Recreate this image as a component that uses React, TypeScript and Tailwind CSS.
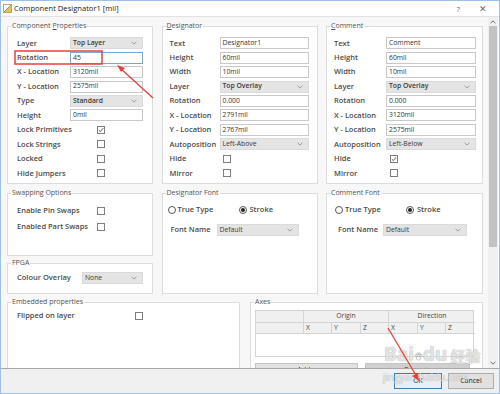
import React from 'react';

function Chevron() {
  return (
    <svg width="6" height="4" viewBox="0 0 6 4" className="shrink-0">
      <path d="M0.6 0.8 L3 3.1 L5.4 0.8" fill="none" stroke="#8c8c8c" strokeWidth="0.8" />
    </svg>
  );
}

function Input({ value, w, focus }: { value: string; w: string; focus?: boolean }) {
  return (
    <div
      className={`flex h-[12px] shrink-0 items-center border bg-white px-[2px] text-[6.8px] text-[#333] ${w} ${
        focus ? 'border-[#7aa6d6]' : 'border-[#c8c8c8]'
      }`}
    >
      {value}
    </div>
  );
}

function Select({ value, w, bold }: { value: string; w: string; bold?: boolean }) {
  return (
    <div
      className={`flex h-[12px] shrink-0 items-center justify-between border border-[#dadada] bg-[#e4e4e4] pl-[2px] pr-[5px] text-[6.8px] text-[#3a3a3a] ${w} ${
        bold ? 'font-semibold' : ''
      }`}
    >
      <span>{value}</span>
      <Chevron />
    </div>
  );
}

function Check({ checked, className = '' }: { checked?: boolean; className?: string }) {
  return (
    <span className={`flex h-[8px] w-[8px] shrink-0 items-center justify-center border border-[#7d7d7d] bg-white ${className}`}>
      {checked && (
        <svg width="6" height="6" viewBox="0 0 6 6">
          <path d="M0.8 3.2 L2.3 4.6 L5.2 1.2" fill="none" stroke="#333" strokeWidth="0.8" />
        </svg>
      )}
    </span>
  );
}

function Radio({ checked }: { checked?: boolean }) {
  return (
    <span className="flex h-[8px] w-[8px] shrink-0 items-center justify-center rounded-full border border-[#555] bg-white">
      {checked && <span className="h-[4px] w-[4px] rounded-full bg-[#222]" />}
    </span>
  );
}

function Row({ label, lw, h = 'h-[14.44px]', children }: { label: string; lw: string; h?: string; children?: React.ReactNode }) {
  return (
    <div className={`flex items-center ${h}`}>
      <span className={`shrink-0 text-[7.5px] font-semibold text-[#4b4b4b] ${lw}`}>{label}</span>
      {children}
    </div>
  );
}

function Group({ title, className = '', children }: { title: React.ReactNode; className?: string; children?: React.ReactNode }) {
  return (
    <fieldset className={`min-w-0 overflow-hidden border border-[#dcdcdc] bg-white ${className}`}>
      <legend className="ml-[3px] px-[1px] text-[7px] leading-[10px] text-[#555]">{title}</legend>
      {children}
    </fieldset>
  );
}

export default function App() {
  return (
    <div className="relative flex h-[394px] w-[500px] flex-col overflow-hidden border border-[#9dc1e6] bg-white font-['Open_Sans','Noto_Sans',sans-serif]">
      {/* title bar */}
      <div className="flex h-[16px] shrink-0 items-center border-b border-[#e2e2e2] bg-white">
        <svg width="9" height="9" viewBox="0 0 9 9" className="ml-[2px]">
          <rect x="0.5" y="0.5" width="8" height="8" fill="#fff" stroke="#b9a66a" />
          <path d="M1 8 L8 1 L8 8 Z" fill="#e7c25a" />
          <path d="M1 8 L8 1" stroke="#9a7b2a" strokeWidth="0.8" />
        </svg>
        <span className="ml-[2px] text-[7.6px] text-[#222]">Component Designator1 [mil]</span>
        <span className="ml-auto text-[8px] text-[#666]">?</span>
        <span className="ml-[19px] mr-[12px] text-[9px] leading-none text-[#666]">✕</span>
      </div>

      <div className="flex min-h-0 flex-1">
        {/* content */}
        <div className="min-w-0 flex-1 overflow-hidden bg-[#f7f7f7] pl-[6px] pr-[4px] pt-[4px]">
          <div className="grid grid-cols-[146px_156px_157px] gap-x-[8.5px]">
            <Group title={<>Component <u>P</u>roperties</>} className="h-[163px]">
              <div className="pl-[9px] pt-[5px]">
                <Row label="Layer" lw="w-[53px]"><Select value="Top Layer" w="w-[73px]" bold /></Row>
                <Row label="Rotation" lw="w-[53px]"><Input value="45" w="w-[73px]" focus /></Row>
                <Row label="X - Location" lw="w-[53px]"><Input value="3120mil" w="w-[73px]" /></Row>
                <Row label="Y - Location" lw="w-[53px]"><Input value="2575mil" w="w-[73px]" /></Row>
                <Row label="Type" lw="w-[53px]"><Select value="Standard" w="w-[73px]" bold /></Row>
                <Row label="Height" lw="w-[53px]"><Input value="0mil" w="w-[73px]" /></Row>
                <Row label="Lock Primitives" lw="w-[80px]"><Check checked /></Row>
                <Row label="Lock Strings" lw="w-[80px]"><Check /></Row>
                <Row label="Locked" lw="w-[80px]"><Check /></Row>
                <Row label="Hide Jumpers" lw="w-[80px]"><Check /></Row>
              </div>
            </Group>

            <Group title={<><u>D</u>esignator</>} className="h-[163px]">
              <div className="pl-[7px] pt-[5px]">
                <Row label="Text" lw="w-[50px]"><Input value="Designator1" w="w-[89px]" /></Row>
                <Row label="Height" lw="w-[50px]"><Input value="60mil" w="w-[89px]" /></Row>
                <Row label="Width" lw="w-[50px]"><Input value="10mil" w="w-[89px]" /></Row>
                <Row label="Layer" lw="w-[50px]"><Select value="Top Overlay" w="w-[89px]" bold /></Row>
                <Row label="Rotation" lw="w-[50px]"><Input value="0.000" w="w-[89px]" /></Row>
                <Row label="X - Location" lw="w-[50px]"><Input value="2791mil" w="w-[89px]" /></Row>
                <Row label="Y - Location" lw="w-[50px]"><Input value="2767mil" w="w-[89px]" /></Row>
                <Row label="Autoposition" lw="w-[50px]"><Select value="Left-Above" w="w-[89px]" /></Row>
                <Row label="Hide" lw="w-[50px]"><Check className="ml-[3px]" /></Row>
                <Row label="Mirror" lw="w-[50px]"><Check className="ml-[3px]" /></Row>
              </div>
            </Group>

            <Group title={<><u>C</u>omment</>} className="h-[163px]">
              <div className="pl-[7px] pt-[5px]">
                <Row label="Text" lw="w-[52px]"><Input value="Comment" w="w-[90px]" /></Row>
                <Row label="Height" lw="w-[52px]"><Input value="60mil" w="w-[90px]" /></Row>
                <Row label="Width" lw="w-[52px]"><Input value="10mil" w="w-[90px]" /></Row>
                <Row label="Layer" lw="w-[52px]"><Select value="Top Overlay" w="w-[90px]" bold /></Row>
                <Row label="Rotation" lw="w-[52px]"><Input value="0.000" w="w-[90px]" /></Row>
                <Row label="X - Location" lw="w-[52px]"><Input value="3120mil" w="w-[90px]" /></Row>
                <Row label="Y - Location" lw="w-[52px]"><Input value="2575mil" w="w-[90px]" /></Row>
                <Row label="Autoposition" lw="w-[52px]"><Select value="Left-Below" w="w-[90px]" /></Row>
                <Row label="Hide" lw="w-[52px]"><Check checked className="ml-[4px]" /></Row>
                <Row label="Mirror" lw="w-[52px]"><Check className="ml-[4px]" /></Row>
              </div>
            </Group>
          </div>

          {/* second row */}
          <div className="mt-[4px] grid grid-cols-[146px_156px_157px] gap-x-[8.5px]">
            <div className="flex flex-col gap-[2px]">
              <Group title="Swapping Options" className="h-[68px]">
                <div className="pl-[9px] pt-[5px]">
                  <Row label="Enable Pin Swaps" lw="w-[80px]" h="h-[16px]"><Check /></Row>
                  <Row label="Enabled Part Swaps" lw="w-[80px]" h="h-[16px]"><Check /></Row>
                </div>
              </Group>
              <Group title="FPGA" className="h-[36px]">
                <div className="pl-[9px] pt-[3px]">
                  <Row label="Colour Overlay" lw="w-[65px]" h="h-[14px]"><Select value="None" w="w-[61px]" /></Row>
                </div>
              </Group>
            </div>

            <Group title="Designator Font" className="h-[106px]">
              <div className="pl-[5px] pt-[5px]">
                <div className="flex h-[14px] items-center text-[7.5px] font-semibold text-[#4b4b4b]">
                  <span className="flex w-[71px] items-center gap-[2px]"><Radio />True Type</span>
                  <span className="flex items-center gap-[3px]"><Radio checked />Stroke</span>
                </div>
                <div className="mt-[6px] pl-[3px]">
                  <Row label="Font Name" lw="w-[46px]" h="h-[14px]"><Select value="Default" w="w-[82px]" /></Row>
                </div>
              </div>
            </Group>

            <Group title="Comment Font" className="h-[106px]">
              <div className="pl-[8px] pt-[5px]">
                <div className="flex h-[14px] items-center text-[7.5px] font-semibold text-[#4b4b4b]">
                  <span className="flex w-[71px] items-center gap-[2px]"><Radio />True Type</span>
                  <span className="flex items-center gap-[3px]"><Radio checked />Stroke</span>
                </div>
                <div className="mt-[6px] pl-[3px]">
                  <Row label="Font Name" lw="w-[45px]" h="h-[14px]"><Select value="Default" w="w-[84px]" /></Row>
                </div>
              </div>
            </Group>
          </div>

          {/* third row */}
          <div className="mt-[3px] grid grid-cols-[233px_233px] gap-x-[10px]">
            <Group title="Embedded properties" className="h-[90px]">
              <div className="pl-[9px] pt-[2px]">
                <Row label="Flipped on layer" lw="w-[118px]" h="h-[14px]"><Check /></Row>
              </div>
            </Group>
            <Group title="Axes" className="h-[90px]">
              <div className="pl-[4px] pr-[8px] pt-[3px]">
                <div className="border border-[#d4d4d4] bg-white text-[6.8px] text-[#444]">
                  <div className="grid grid-cols-[48px_85px_86px] bg-[#f0f0f0]">
                    <div className="h-[12px] border-b border-r border-[#d4d4d4]" />
                    <div className="flex h-[12px] items-center justify-center border-b border-r border-[#d4d4d4]">Origin</div>
                    <div className="flex h-[12px] items-center justify-center border-b border-[#d4d4d4]">Direction</div>
                  </div>
                  <div className="grid grid-cols-[48px_28px_29px_28px_29px_28px_29px] bg-[#f0f0f0]">
                    <div className="h-[11px] border-b border-r border-[#d4d4d4]" />
                    {['X', 'Y', 'Z', 'X', 'Y', 'Z'].map((c, i) => (
                      <div key={i} className="flex h-[11px] items-center border-b border-r border-[#d4d4d4] pl-[2px] last:border-r-0">
                        {c}
                      </div>
                    ))}
                  </div>
                  <div className="h-[22px]" />
                </div>
                <div className="mt-[6px] flex gap-[7px]">
                  <div className="flex h-[14px] w-[103px] items-center justify-center border border-[#c4c4c4] bg-[#e1e1e1] text-[7px] text-[#333]">Add...</div>
                  <div className="flex h-[14px] w-[105px] items-center justify-center border border-[#c4c4c4] bg-[#cfcfcf] text-[7px] text-[#333]">Remove</div>
                </div>
              </div>
            </Group>
          </div>
        </div>

        {/* scrollbar */}
        <div className="mr-[1px] flex w-[10px] shrink-0 flex-col bg-[#f0f0f0]">
          <div className="flex h-[9px] items-center justify-center">
            <svg width="6" height="4" viewBox="0 0 6 4">
              <path d="M0.6 3.2 L3 0.9 L5.4 3.2" fill="none" stroke="#606060" strokeWidth="0.9" />
            </svg>
          </div>
          <div className="mx-[1px] h-[221px] bg-[#c2c2c2]" />
          <div className="flex-1" />
          <div className="flex h-[10px] items-center justify-center">
            <svg width="6" height="4" viewBox="0 0 6 4">
              <path d="M0.6 0.8 L3 3.1 L5.4 0.8" fill="none" stroke="#606060" strokeWidth="0.9" />
            </svg>
          </div>
        </div>
      </div>

      {/* button bar */}
      <div className="flex h-[25px] shrink-0 items-center justify-end gap-[6px] border-t border-[#a8a8a8] bg-[#f0f0f0] pr-[5px]">
        <div className="flex h-[16px] w-[48px] items-center justify-center border border-[#3c7fb1] bg-[#e8eef4] text-[7px] text-[#222]">OK</div>
        <div className="flex h-[16px] w-[46px] items-center justify-center border border-[#adadad] bg-[#e1e1e1] text-[7px] text-[#222]">Cancel</div>
      </div>

      {/* watermark */}
      <div className="pointer-events-none absolute left-[383px] top-[344px] flex items-end leading-none text-white/75 [text-shadow:0_0_1px_#8a8a8a]">
        <span className="text-[19px] font-bold">Bai</span>
        <svg width="9" height="11" viewBox="0 0 13 13" className="mb-[2px]">
          <g fill="#ffffff" fillOpacity="0.8" stroke="#8a8a8a" strokeWidth="0.7">
            <ellipse cx="6.5" cy="9" rx="3.2" ry="2.6" />
            <ellipse cx="3" cy="5" rx="1.3" ry="1.7" />
            <ellipse cx="5.3" cy="2.8" rx="1.3" ry="1.7" />
            <ellipse cx="7.9" cy="2.8" rx="1.3" ry="1.7" />
            <ellipse cx="10.1" cy="5" rx="1.3" ry="1.7" />
          </g>
        </svg>
        <span className="text-[19px] font-bold">du</span>
        <span className="ml-[3px] mb-[1px] font-['Noto_Sans_CJK_SC',sans-serif] text-[15px] font-bold">经验</span>
      </div>
      <div className="pointer-events-none absolute left-[382px] top-[371px] text-[10px] leading-none text-white/75 [text-shadow:0_0_1px_#8a8a8a]">
        jingyan.baidu.com
      </div>

      {/* annotations */}
      <svg className="pointer-events-none absolute left-0 top-0" width="500" height="394" viewBox="0 0 500 394">
        <rect x="14" y="50" width="87" height="13" fill="none" stroke="#e8413a" strokeWidth="1.5" />
        <path d="M152 97 L119 67" stroke="#e8413a" strokeWidth="1.3" />
        <path d="M116 64 L124 67 L120 71 Z" fill="#e8413a" />
        <path d="M387 327 L416 376" stroke="#e8413a" strokeWidth="1.3" />
        <path d="M418 380 L411 375 L417 372 Z" fill="#e8413a" />
      </svg>
    </div>
  );
}
